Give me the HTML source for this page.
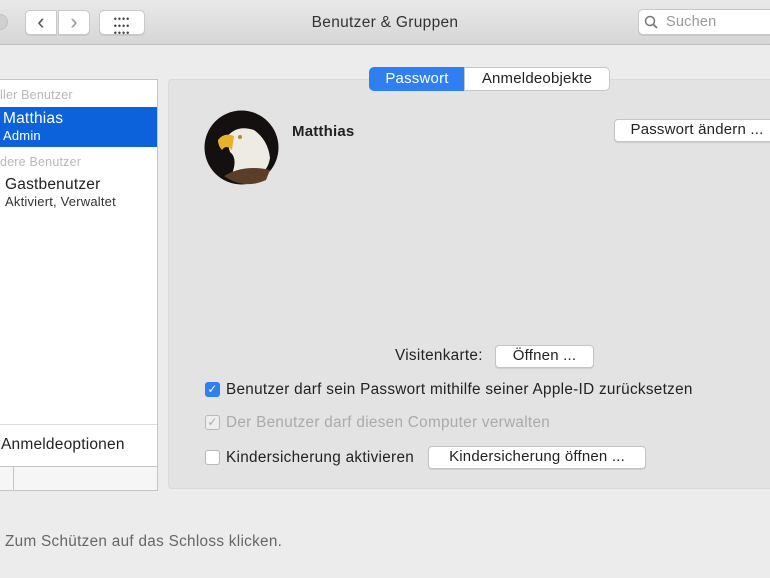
<!DOCTYPE html><html><head><meta charset="utf-8"><style>
*{box-sizing:border-box;margin:0;padding:0}
body{width:770px;height:578px;overflow:hidden;background:#ececec;font-family:"Liberation Sans",sans-serif;font-size:13.5px;color:#222;position:relative;letter-spacing:0.2px}
.a{position:absolute;white-space:nowrap}
.tb{left:0;top:0;width:770px;height:45px;background:linear-gradient(#e9e9e9,#d6d6d6);border-bottom:1px solid #bdbdbd}
.btn{background:#fff;border:1px solid #c8c8c8;border-radius:5px;box-shadow:0 1px 0 rgba(0,0,0,.08)}
.pb{background:#fff;border:1px solid #c4c4c4;border-radius:4px;text-align:center;font-size:15px;line-height:20px;box-shadow:0 1px 1px rgba(0,0,0,.1);letter-spacing:0.2px}
.cb{width:15px;height:15px;border:1px solid #b8b8b8;border-radius:3px;background:#fff}
.t{font-size:15.3px;letter-spacing:0.3px}
</style></head><body>
<div class="a tb"></div>
<div class="a" style="left:-8px;top:14px;width:16px;height:16px;border-radius:50%;background:#d0d0d0;border:1px solid #c0c0c0"></div>
<div class="a btn" style="left:25px;top:10px;width:32px;height:25px;border-radius:5px 0 0 5px;text-align:center;font-size:22px;line-height:21px;color:#555">‹</div>
<div class="a btn" style="left:58px;top:10px;width:32px;height:25px;border-radius:0 5px 5px 0;text-align:center;font-size:22px;line-height:21px;color:#999">›</div>
<div class="a btn" style="left:99px;top:10px;width:46px;height:25px;text-align:center;font-size:9px;line-height:7px;color:#444;padding-top:5px;letter-spacing:1px">••••<br>••••<br>••••</div>
<div class="a" style="left:290px;top:14px;width:190px;text-align:center;font-size:15.5px;color:#333;letter-spacing:0.3px">Benutzer &amp; Gruppen</div>
<div class="a btn" style="left:638px;top:9px;width:140px;height:26px;font-size:14.5px;color:#999;line-height:24px;padding-left:27px">Suchen</div>
<svg class="a" style="left:644px;top:15px" width="14" height="14"><circle cx="6" cy="6" r="4.5" fill="none" stroke="#777" stroke-width="1.5"/><path d="M9.5 9.5L13 13" stroke="#777" stroke-width="1.7"/></svg>

<div class="a" style="left:-2px;top:79px;width:160px;height:412px;background:#fff;border:1px solid #c6c6c6"></div>
<div class="a" style="left:0;top:88px;font-size:12.5px;color:#b8b8b8">ller Benutzer</div>
<div class="a" style="left:0;top:107px;width:157px;height:40px;background:#0b62da;color:#fff"><div style="padding:3px 0 0 3px;font-size:15.5px">Matthias</div><div style="padding-left:3px;font-size:13px">Admin</div></div>
<div class="a" style="left:0;top:155px;font-size:12.5px;color:#b8b8b8">dere Benutzer</div>
<div class="a" style="left:5px;top:176px;font-size:15.5px">Gastbenutzer</div>
<div class="a" style="left:5px;top:194px;font-size:13px;color:#333">Aktiviert, Verwaltet</div>
<div class="a" style="left:0;top:424px;width:157px;border-top:1px solid #ddd"></div>
<div class="a" style="left:1px;top:436px;font-size:15.5px">Anmeldeoptionen</div>
<div class="a" style="left:0;top:466px;width:157px;height:24px;border-top:1px solid #c6c6c6;background:#f6f6f6"></div>
<div class="a" style="left:13px;top:466px;width:1px;height:24px;background:#c6c6c6"></div>

<div class="a" style="left:168px;top:79px;width:610px;height:410px;background:#e3e3e3;border:1px solid #dadada;border-radius:4px"></div>
<div class="a" style="left:369px;top:67px;width:96px;height:24px;background:#2f7ff3;color:#fff;border-radius:5px 0 0 5px;text-align:center;line-height:24px;font-size:15px">Passwort</div>
<div class="a" style="left:464px;top:67px;width:146px;height:24px;background:#fff;border:1px solid #c6c6c6;border-radius:0 5px 5px 0;text-align:center;line-height:22px;font-size:15px">Anmeldeobjekte</div>
<svg class="a" style="left:204px;top:110px" width="75" height="75"><circle cx="37.5" cy="37.5" r="37" fill="#151010"/><path d="M22 28Q32 14 50 20Q64 30 66 48Q64 60 56 64L28 64Q34 48 26 42Z" fill="#eeeae4"/><path d="M14 30Q20 22 30 26L28 40Q22 34 18 40Q14 36 14 30Z" fill="#e7b12a"/><circle cx="36" cy="27" r="2" fill="#b08a3a"/><path d="M20 66Q40 54 66 60L62 70Q40 80 20 66Z" fill="#5a3e28"/></svg>
<div class="a" style="left:292px;top:123px;font-size:15px;font-weight:bold">Matthias</div>
<div class="a pb" style="left:614px;top:119px;width:166px;height:23px">Passwort ändern ...</div>
<div class="a t" style="left:395px;top:347px">Visitenkarte:</div>
<div class="a pb" style="left:495px;top:345px;width:99px;height:23px">Öffnen ...</div>
<div class="a cb" style="left:205px;top:382px;background:#2f7ff3;border-color:#2f7ff3;color:#fff;font-size:12px;line-height:13px;text-align:center">✓</div>
<div class="a t" style="left:226px;top:381px">Benutzer darf sein Passwort mithilfe seiner Apple-ID zurücksetzen</div>
<div class="a cb" style="left:205px;top:415px;background:#eee;color:#aaa;font-size:12px;line-height:13px;text-align:center">✓</div>
<div class="a t" style="left:226px;top:414px;color:#aaa">Der Benutzer darf diesen Computer verwalten</div>
<div class="a cb" style="left:205px;top:450px"></div>
<div class="a t" style="left:226px;top:449px">Kindersicherung aktivieren</div>
<div class="a pb" style="left:428px;top:446px;width:218px;height:23px">Kindersicherung öffnen ...</div>
<div class="a t" style="left:5px;top:533px;color:#666">Zum Schützen auf das Schloss klicken.</div>
</body></html>
